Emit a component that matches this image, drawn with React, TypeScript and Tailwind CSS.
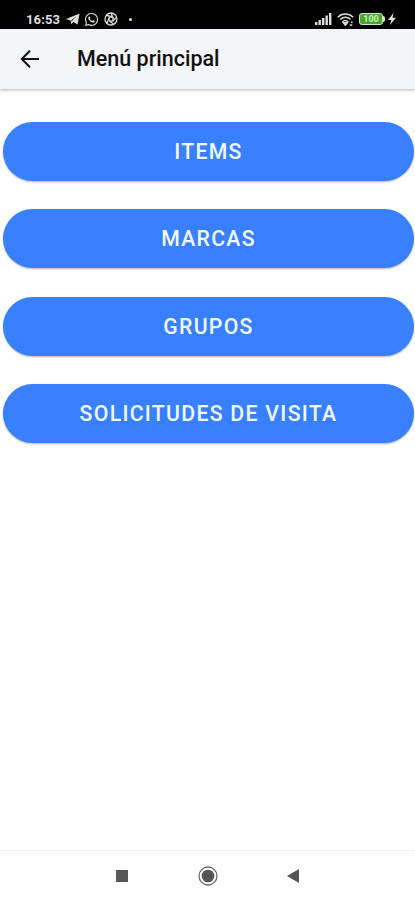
import { FaWhatsapp } from 'react-icons/fa';

const MENU_ITEMS = ['ITEMS', 'MARCAS', 'GRUPOS', 'SOLICITUDES DE VISITA'];

function StatusBar() {
  return (
    <div className="flex h-[29px] items-center bg-black pt-[9px] pr-[19px] pl-[26px] text-[#dedede]">
      <span className="w-[35px] text-[13px] leading-none font-bold tracking-[0.01em] whitespace-nowrap">16:53</span>
      <svg viewBox="0 0 14 12" className="ml-[5px] h-[12px] w-[14px]" fill="currentColor">
        <path d="M13.6.4 11.6 11.6 7.4 8.9 5.3 11.2 4.6 7.4 0 5.9zM10.8 3 5.4 7.3l.4 1.8.5-1.5z" fillRule="evenodd" />
      </svg>
      <FaWhatsapp className="ml-[4px] h-[15px] w-[15px]" />
      <svg viewBox="0 0 14 14" className="ml-[5px] h-[14px] w-[14px]" fill="none" stroke="currentColor" strokeWidth="1.3">
        <circle cx="7" cy="7" r="6" />
        <circle cx="7" cy="7" r="2.2" />
        <path d="M2.7 3.5 9 4.8M7 1.2l2.2 4.9M12.5 5.5 8.5 9M9.5 12 5.5 9.2M3 11.5 5 6" />
      </svg>
      <span className="ml-[11px] h-[3px] w-[3px] rounded-full bg-current" />

      <div className="ml-auto flex items-center">
        <svg viewBox="0 0 17 12" className="h-[12px] w-[17px]" fill="currentColor">
          <path d="M0 9h2.4v3H0zM3.5 7h2.4v5H3.5zM7 5h2.4v7H7zM10.5 2.5h2.4V12h-2.4zM14 0h2.4v12H14z" />
        </svg>
        <svg viewBox="0 0 17 13" className="ml-[5px] h-[13px] w-[17px]" fill="none" stroke="currentColor" strokeWidth="1.5">
          <path d="M.7 4.2C5-.1 11.8-.1 16.2 4.2M3.2 6.5c3-2.9 7.4-2.9 10.4 0M5.5 8.8c1.8-1.7 4-1.7 5.8 0" />
          <path d="m6.5 9.7 1.9 2.5 1.9-2.5zM12.8 12h2.5M14 9.2h1.6" />
        </svg>
        <div className="ml-[5px] flex h-[12px] w-[24px] items-center justify-center rounded-[3px] border-[1.5px] border-[#d5e6ce] bg-[#48a62c] text-[9px] leading-none font-bold text-[#c7f5b5]">
          100
        </div>
        <span className="h-[6px] w-[2px] rounded-r-sm bg-[#d5e6ce]" />
        <svg viewBox="0 0 8 12" className="ml-[3px] h-[12px] w-[8px]" fill="currentColor">
          <path d="M5.5 0 0 7h3.3L2 12l6-7.2H4.6z" />
        </svg>
      </div>
    </div>
  );
}

function Toolbar() {
  return (
    <header className="flex h-[60px] items-center bg-[#f4f5f8] pl-[20px] text-[#111] shadow-[0_1px_3px_rgba(0,0,0,0.3)]">
      <button aria-label="Volver" className="h-[20px] w-[20px]">
        <svg viewBox="0 0 20 20" className="h-[20px] w-[20px]" fill="none" stroke="currentColor" strokeWidth="2">
          <path d="M19 10H2.2M10 1.8 1.8 10l8.2 8.2" />
        </svg>
      </button>
      <h1 className="ml-[37px] text-[21.5px] leading-none font-medium">Menú principal</h1>
    </header>
  );
}

function NavigationBar() {
  return (
    <nav className="flex h-[50px] items-center border-t border-[#f1f1f1] pl-[116px]">
      <span className="h-[12px] w-[12px] bg-[#585858]" />
      <svg viewBox="0 0 20 20" className="ml-[70px] h-[20px] w-[20px]" fill="none" stroke="#6a6a6a">
        <circle cx="10" cy="10" r="9" strokeWidth="1.3" />
        <circle cx="10" cy="10" r="6.3" fill="#555" stroke="none" />
      </svg>
      <svg viewBox="0 0 12 14" className="ml-[69px] h-[14px] w-[12px]" fill="#555">
        <path d="M0 7 12 0v14z" />
      </svg>
    </nav>
  );
}

export default function App() {
  return (
    <div className="flex h-[900px] w-full flex-col overflow-hidden bg-white font-[Roboto,sans-serif]">
      <StatusBar />
      <Toolbar />
      <main className="flex flex-1 flex-col gap-[28.5px] pt-[32.7px] pr-px pl-[3px]">
        {MENU_ITEMS.map((item) => (
          <button
            key={item}
            className="h-[59px] shrink-0 rounded-full bg-[#3880ff] text-[21.25px] leading-none font-medium tracking-[0.06em] text-[#f2f8ff] shadow-[0_1px_2px_rgba(0,0,0,0.3)]"
          >
            {item}
          </button>
        ))}
      </main>
      <NavigationBar />
    </div>
  );
}
